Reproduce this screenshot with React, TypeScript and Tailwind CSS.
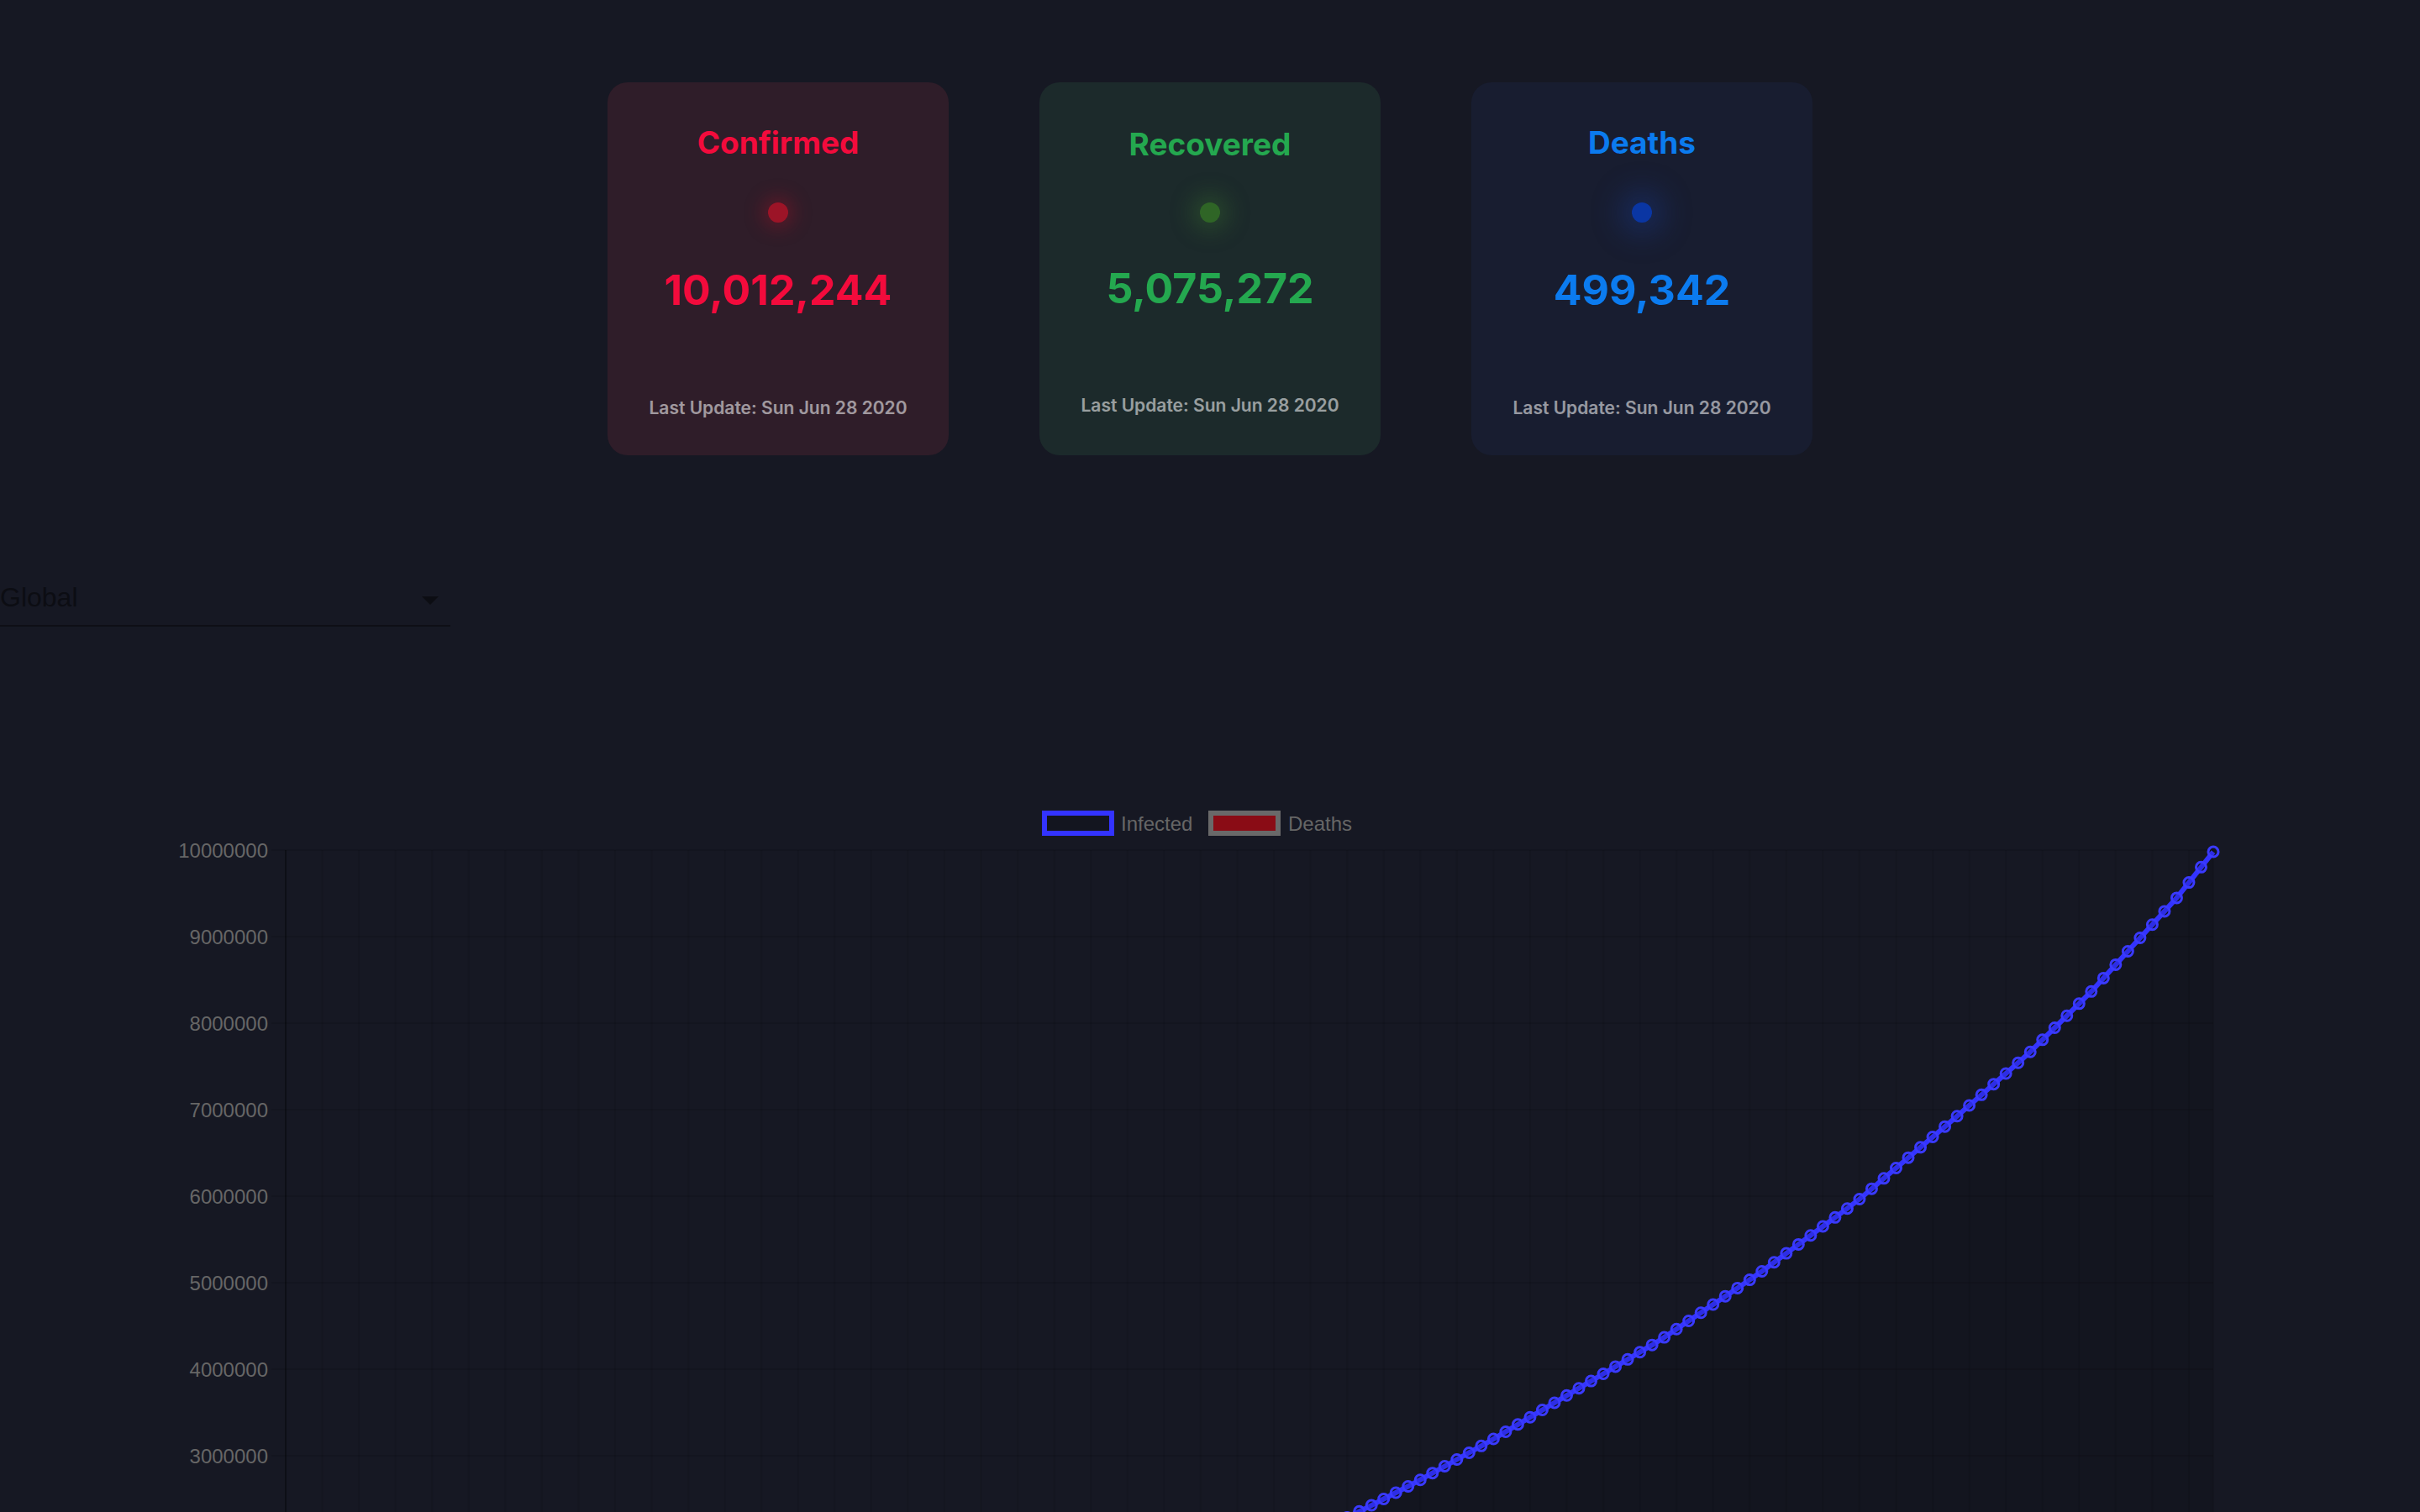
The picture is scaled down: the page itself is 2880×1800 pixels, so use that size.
import React from "react";

type Anchor = [number, number];

// global confirmed cases, day 0 = Jan 22 2020
const infectedAnchors: Anchor[] = [
  [0, 555], [5, 2927], [9, 9927], [14, 28276], [19, 42762], [24, 69032], [29, 76199],
  [34, 80400], [38, 86011], [44, 101800], [49, 126214], [54, 182000], [59, 304000],
  [64, 529000], [69, 857000], [74, 1272000], [79, 1691000], [84, 2081000], [88.5, 2390000],
  [92.6, 2690000], [98.6, 3160000], [106.6, 3830000], [112.6, 4330000], [120.6, 5090000],
  [128.7, 5930000], [136.8, 6900000], [142.8, 7640000], [147.9, 8350000], [151.9, 8970000],
  [154.9, 9430000], [158, 9980000],
];

const deathAnchors: Anchor[] = [
  [0, 17], [38, 2900], [54, 7000], [69, 42000], [84, 137000], [99, 234000],
  [114, 303000], [130, 371000], [145, 436000], [158, 499342],
];

const DAYS = 159;

function series(anchors: Anchor[]) {
  const out: number[] = [];
  for (let i = 0; i < DAYS; i++) {
    let k = 0;
    while (k < anchors.length - 2 && anchors[k + 1][0] < i) k++;
    const [x0, y0] = anchors[k];
    const [x1, y1] = anchors[k + 1];
    out.push(y0 + ((i - x0) / (x1 - x0)) * (y1 - y0));
  }
  return out;
}

const infected = series(infectedAnchors);
const deaths = series(deathAnchors);

// chart geometry (svg coords, svg top sits at page y=940)
const LEFT = 340;
const RIGHT = 2634;
const TOP = 72;
const PER_MILLION = 103;
const px = (i: number) => LEFT + (i * (RIGHT - LEFT)) / (DAYS - 1);
const py = (v: number) => TOP + ((10000000 - v) / 1000000) * PER_MILLION;
const BASE = py(0);
const FONT = "'Liberation Sans', Arial, sans-serif";

const cards = [
  {
    title: "Confirmed",
    value: "10,012,244",
    bg: "bg-[#2f1d29]",
    text: "text-[#f30b3c]",
    dot: "bg-[#9c1427] shadow-[0_0_22px_6px_rgba(150,20,40,0.45)]",
    space: ["pt-[49px]", "mt-[48px]", "mt-[50px]", "mt-[98px]"],
  },
  {
    title: "Recovered",
    value: "5,075,272",
    bg: "bg-[#1c2a2b]",
    text: "text-[#24a84f]",
    dot: "bg-[#2f6526] shadow-[0_0_26px_10px_rgba(60,120,45,0.35)]",
    space: ["pt-[51px]", "mt-[46px]", "mt-[48px]", "mt-[97px]"],
  },
  {
    title: "Deaths",
    value: "499,342",
    bg: "bg-[#181d30]",
    text: "text-[#0b7bef]",
    dot: "bg-[#0a36a3] shadow-[0_0_34px_14px_rgba(25,60,150,0.4)]",
    space: ["pt-[49px]", "mt-[48px]", "mt-[50px]", "mt-[98px]"],
  },
];

function Card({ card }: { card: (typeof cards)[number] }) {
  const [pt, dotMt, numMt, updMt] = card.space;
  return (
    <div className={`w-[406px] h-[444px] rounded-[24px] ${card.bg} flex flex-col items-center ${pt}`}>
      <h2 className={`text-[37px] leading-[46px] font-bold ${card.text}`}>{card.title}</h2>
      <div className={`${dotMt} w-[24px] h-[24px] rounded-full ${card.dot}`} />
      <p className={`${numMt} text-[50px] leading-[60px] font-bold ${card.text}`}>{card.value}</p>
      <p className={`${updMt} text-[21px] leading-[26px] font-semibold text-white/55`}>
        Last Update: Sun Jun 28 2020
      </p>
    </div>
  );
}

function Chart() {
  const line = infected.map((v, i) => `${i ? "L" : "M"}${px(i).toFixed(1)},${py(v).toFixed(1)}`).join(" ");
  const area = `${line} L${px(DAYS - 1)},${BASE} L${px(0)},${BASE} Z`;
  const dline = deaths.map((v, i) => `${i ? "L" : "M"}${px(i).toFixed(1)},${py(v).toFixed(1)}`).join(" ");
  const darea = `${dline} L${px(DAYS - 1)},${BASE} L${px(0)},${BASE} Z`;
  const vLines: number[] = [];
  for (let i = 0; i < DAYS; i += 3) vLines.push(px(i));
  vLines.push(RIGHT);

  return (
    <svg width={2880} height={860} viewBox="0 0 2880 860" className="block">
      {/* legend */}
      <rect x={1243} y={28} width={80} height={24} fill="rgba(0,0,0,0.1)" stroke="#3333ff" strokeWidth={6} />
      <text x={1334} y={40} dominantBaseline="central" fontSize={24} fill="#666" fontFamily={FONT}>
        Infected
      </text>
      <rect x={1441} y={28} width={80} height={24} fill="#8a0c15" stroke="#696969" strokeWidth={6} />
      <text x={1533} y={40} dominantBaseline="central" fontSize={24} fill="#666" fontFamily={FONT}>
        Deaths
      </text>

      {/* grid */}
      {vLines.map((x, i) => (
        <line key={`v${i}`} x1={x} x2={x} y1={TOP} y2={BASE + 14} stroke="rgba(0,0,0,0.08)" strokeWidth={2} />
      ))}
      {Array.from({ length: 11 }).map((_, k) => (
        <line key={`h${k}`} x1={323} x2={RIGHT} y1={TOP + k * PER_MILLION} y2={TOP + k * PER_MILLION} stroke="rgba(0,0,0,0.1)" strokeWidth={2} />
      ))}
      <line x1={LEFT} x2={LEFT} y1={TOP} y2={BASE} stroke="rgba(0,0,0,0.3)" strokeWidth={2} />

      {/* y labels (the lower ones sit below the fold) */}
      {Array.from({ length: 8 }).map((_, k) => (
        <text
          key={`l${k}`}
          x={319}
          y={TOP + k * PER_MILLION}
          textAnchor="end"
          dominantBaseline="central"
          fontSize={24}
          fill="#666"
          fontFamily={FONT}
        >
          {(10 - k) * 1000000}
        </text>
      ))}

      {/* datasets */}
      <path d={darea} fill="rgba(255,0,0,0.5)" />
      <path d={dline} fill="none" stroke="#ff0000" strokeWidth={6} />
      <path d={area} fill="rgba(0,0,0,0.1)" />
      <path d={line} fill="none" stroke="#3333ff" strokeWidth={6} strokeLinejoin="round" />
      {infected.map((v, i) => (
        <circle key={i} cx={px(i)} cy={py(v)} r={6} fill="rgba(0,0,0,0.1)" stroke="#3a3aff" strokeWidth={3} />
      ))}
    </svg>
  );
}

export default function App() {
  return (
    <div className="w-[2880px] h-[1800px] overflow-hidden bg-[#161823] font-['Inter',sans-serif]">
      <section className="pt-[98px] flex justify-center gap-[108px]">
        {cards.map((c) => (
          <Card key={c.title} card={c} />
        ))}
      </section>

      <div className="mt-[151px] w-[536px] h-[53px] border-b-2 border-[#0e0f16] flex justify-between font-['Liberation_Sans',Arial,sans-serif]">
        <span className="text-[32px] leading-[36px] text-[#0c0d13]">Global</span>
        <span className="mt-[17px] mr-[14px] w-0 h-0 border-l-[10px] border-r-[10px] border-t-[10px] border-l-transparent border-r-transparent border-t-[#0c0d13]" />
      </div>

      <div className="mt-[194px]">
        <Chart />
      </div>
    </div>
  );
}
